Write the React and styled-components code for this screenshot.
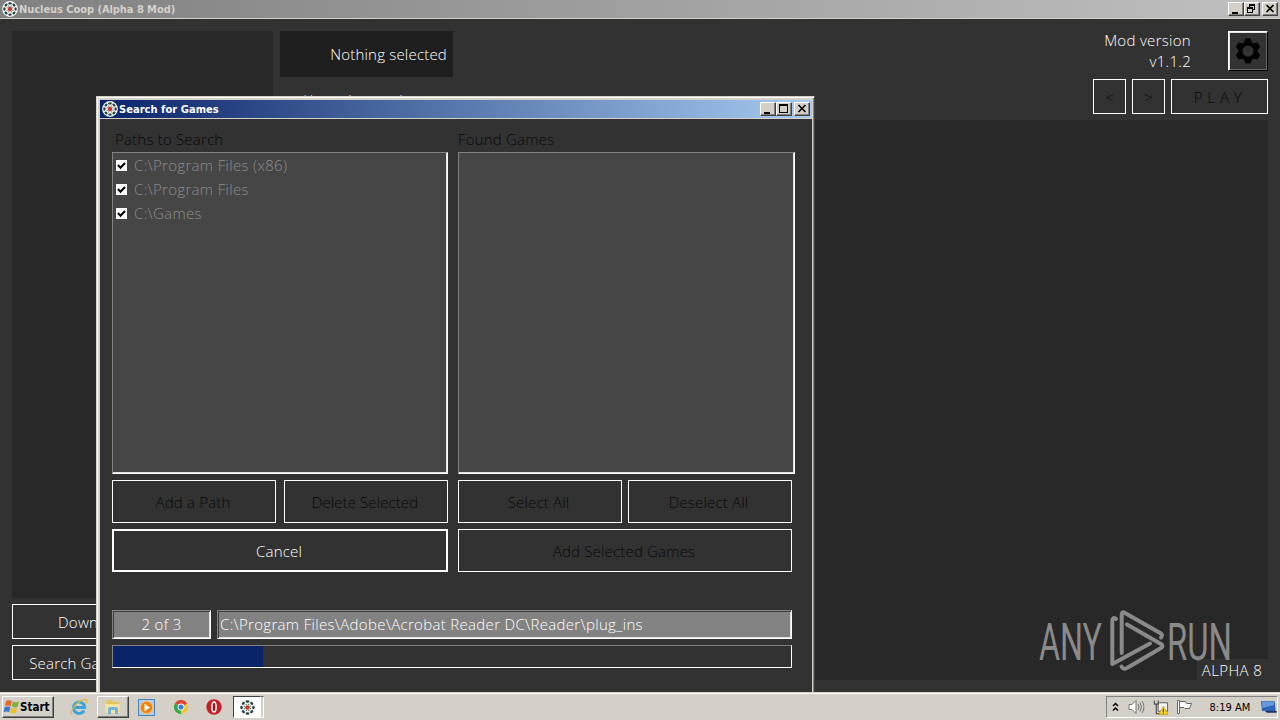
import React from 'react';
import styled, { createGlobalStyle, css } from 'styled-components';

const GlobalStyle = createGlobalStyle`
  * {
    box-sizing: border-box;
  }

  body {
    margin: 0;
    overflow: hidden;
    background: #323232;
  }
`;

const uiFont = css`
  font-family: 'Open Sans', 'Noto Sans', sans-serif;
  font-size: 15px;
  font-weight: 300;
`;

const captionFont = css`
  font-family: 'DejaVu Sans Condensed', 'DejaVu Sans', sans-serif;
  font-stretch: condensed;
  font-size: 11px;
`;

const Desktop = styled.div`
  position: relative;
  width: 1280px;
  height: 720px;
  overflow: hidden;
  display: flex;
  flex-direction: column;
  color: #fff;
  white-space: nowrap;
  ${uiFont}
`;

const TitleBar = styled.div`
  display: flex;
  align-items: center;
  flex: none;
  height: 19px;
  padding: 0 2px;
  border-bottom: 1px solid #d4d0c8;
  background: ${({ $active }) =>
    $active
      ? 'linear-gradient(90deg, #0a246a, #a6caf0)'
      : 'linear-gradient(90deg, #808080, #c0c0c0)'};
  color: ${({ $active }) => ($active ? '#fff' : '#d4d0c8')};
`;

const Caption = styled.span`
  flex: 1;
  height: 18px;
  margin-left: 1px;
  line-height: 20px;
  ${captionFont}
  font-weight: 700;
  letter-spacing: ${({ $track }) => $track || 0}px;
`;

const CaptionButton = styled.div`
  width: 16px;
  height: 14px;
  margin-left: ${({ $gap }) => $gap || 0}px;
  background: #d4d0c8;
  border: 1px solid;
  border-color: #fff #404040 #404040 #fff;
  box-shadow: inset -1px -1px #808080;

  svg {
    display: block;
  }
`;

const MainBody = styled.div`
  flex: 1;
  display: flex;
  gap: 7px;
  padding: 12px 12px 0;
  background: #323232;
`;

const Sidebar = styled.div`
  display: flex;
  flex-direction: column;
  gap: 6px;
  width: 261px;
`;

const GameList = styled.div`
  height: 567px;
  background: #282828;
`;

const ButtonRow = styled.div`
  display: flex;
  gap: ${({ $gap }) => $gap || 6}px;

  > * {
    flex: 1 1 0;
  }
`;

const Button = styled.div`
  display: flex;
  align-items: center;
  justify-content: center;
  ${({ $width }) => $width && `&& { flex: none; width: ${$width}px; }`}
  height: ${({ $height }) => $height || 35}px;
  padding-right: ${({ $shift = 2 }) => $shift}px;
  border: ${({ $focused }) => ($focused ? 2 : 1)}px solid #fff;
  color: ${({ $disabled }) => ($disabled ? '#080808' : '#fff')};
  letter-spacing: ${({ $track = 0.18 }) => $track}px;
`;

const Content = styled.div`
  flex: 1;
  display: flex;
  flex-direction: column;
`;

const ContentHeader = styled.div`
  display: flex;
  justify-content: space-between;
  height: 89px;
`;

const Selected = styled.div`
  width: 173px;
  height: 46px;
  margin-bottom: 9px;
  padding-right: 6px;
  background: #1f1f1f;
  text-align: right;
  line-height: 47px;
  letter-spacing: 0.2px;
`;

const Author = styled.div`
  font-size: 13px;
  line-height: 28px;
`;

const HeaderRight = styled.div`
  display: flex;
  flex-direction: column;
  gap: 8px;
`;

const VersionRow = styled.div`
  display: flex;
  justify-content: flex-end;
  gap: 37px;
  height: 40px;
`;

const Version = styled.div`
  margin-top: -1px;
  line-height: 21px;
  text-align: right;
  letter-spacing: 0.3px;
`;

const GearButton = styled.div`
  display: flex;
  align-items: center;
  justify-content: center;
  width: 40px;
  height: 40px;
  border: 1px solid;
  border-color: #fff #000 #000 #fff;
  box-shadow: inset 1px 1px #e3e3e3, inset -1px -1px #696969;
`;

const Stage = styled.div`
  display: flex;
  flex-direction: column;
  align-items: flex-end;
  justify-content: flex-end;
  height: 560px;
  background: #282828;
`;

const Alpha = styled.div`
  width: 71px;
  height: 21px;
  padding-right: 1px;
  background: #323232;
  text-align: center;
  line-height: 22px;
  letter-spacing: 0.4px;
`;

const Watermark = styled.svg`
  position: absolute;
  left: 1036px;
  top: 606px;
`;

const Dialog = styled.div`
  position: absolute;
  left: 96px;
  top: 96px;
  width: 719px;
  height: 600px;
  padding: 2px;
  border: 1px solid;
  border-color: #d4d0c8 #404040 #404040 #d4d0c8;
  box-shadow: inset 1px 1px #fff, inset -1px -1px #808080;
  background: #d4d0c8;
`;

const DialogFrame = styled.div`
  height: 100%;
  margin: 1px 0 0 1px;
  display: flex;
  flex-direction: column;
`;

const DialogBody = styled.div`
  flex: 1;
  padding: 11px 0 0 12px;
  background: #323232;
`;

const Columns = styled.div`
  display: grid;
  grid-template-columns: 336px 337px;
  column-gap: 10px;
`;

const Column = styled.div`
  display: flex;
  flex-direction: column;
  gap: 6px;
`;

const ListLabel = styled.div`
  height: 16px;
  margin-left: ${({ $indent }) => $indent || 0}px;
  color: #080808;
  line-height: 18px;
  letter-spacing: 0.2px;
`;

const ListBox = styled.div`
  height: 322px;
  padding-left: 3px;
  border: 1px solid;
  border-color: #828282 #fff #fff #828282;
  box-shadow: inset -1px -1px #e3e3e3;
  background: #464646;
`;

const PathRow = styled.div`
  display: flex;
  align-items: center;
  gap: 7px;
  height: 24px;
  color: #8c8c8c;
  letter-spacing: 0.32px;
`;

const CheckBox = styled.svg`
  flex: none;
  margin-top: 1px;
  background: #fff;
`;

const ListActions = styled.div`
  display: flex;
  flex-direction: column;
  gap: 6px;
  width: ${({ $width }) => $width}px;
`;

const StatusRow = styled.div`
  display: flex;
  gap: 6px;
  width: 680px;
  margin-top: 38px;
`;

const StatusField = styled.div`
  width: ${({ $width }) => $width}px;
  height: 29px;
  padding-left: ${({ $center }) => ($center ? 0 : 2)}px;
  border: 1px solid;
  border-color: #828282 #fff #fff #828282;
  box-shadow: inset 1px 1px #404040, inset -1px -1px #e3e3e3;
  background: #828282;
  text-align: ${({ $center }) => ($center ? 'center' : 'left')};
  line-height: 27px;
  letter-spacing: 0.32px;
`;

const Progress = styled.div`
  width: 680px;
  height: 23px;
  margin-top: 6px;
  border: 1px solid;
  border-color: #828282 #fff #fff #828282;
`;

const ProgressFill = styled.div`
  height: 100%;
  background: #0a246a;
`;

const TaskBar = styled.div`
  position: relative;
  z-index: 1;
  display: flex;
  align-items: center;
  justify-content: space-between;
  flex: none;
  height: 28px;
  padding: 3px 2px 2px;
  border-top: 1px solid #d4d0c8;
  background: #d4d0c8;
  box-shadow: inset 0 1px #fff;
  color: #000;
  ${captionFont}
`;

const Launchers = styled.div`
  display: flex;
  align-items: center;
`;

const StartButton = styled.div`
  display: flex;
  align-items: center;
  width: 52px;
  height: 22px;
  padding: 0 0 1px;
  margin-right: 8px;
  border: 1px solid;
  border-color: #fff #404040 #404040 #fff;
  box-shadow: inset -1px -1px #808080;
  font-weight: 700;
  font-size: 11.5px;
`;

const TaskItem = styled.div`
  display: flex;
  align-items: center;
  justify-content: center;
  width: ${({ $width }) => $width || 34}px;
  height: 22px;
  ${({ $raised }) =>
    $raised &&
    css`
      margin-left: 1px;
      border: 1px solid;
      border-color: #fff #404040 #404040 #fff;
      box-shadow: inset -1px -1px #808080;
    `}
  ${({ $pressed }) =>
    $pressed &&
    css`
      margin-left: 2px;
      border: 1px solid;
      border-color: #404040 #fff #fff #404040;
      background: #fff;
    `}
`;

const Grip = styled.div`
  width: 3px;
  height: 22px;
  border: 1px solid;
  border-color: #404040 #fff #fff #d4d0c8;
`;

const Tray = styled.div`
  display: flex;
  align-items: center;
  width: 172px;
  height: 22px;
  padding-left: 4px;
  border: 1px solid;
  border-color: #808080 #fff #fff #808080;
`;

const Clock = styled.span`
  width: 51px;
  margin: 0 2px 0 9px;
  letter-spacing: 0.05px;
`;

const petals = [0, 45, 90, 135, 180, 225, 270, 315];

const NucleusIcon = ({ size = 16 }) => (
  <svg width={size} height={size} viewBox="0 0 16 16">
    <circle cx="8" cy="8" r="7.9" fill="#f4f4f4" />
    {petals.map((angle) => (
      <ellipse
        key={angle}
        cx="8"
        cy="2.4"
        rx="1.7"
        ry="1.2"
        fill="#26443e"
        transform={`rotate(${angle} 8 8)`}
      />
    ))}
    {petals.map((angle) => (
      <circle
        key={angle}
        cx="8"
        cy="4.9"
        r="0.6"
        fill="#52685f"
        transform={`rotate(${angle + 22} 8 8)`}
      />
    ))}
    <circle cx="8" cy="8" r="2.2" fill="#c8382c" />
  </svg>
);

const MinimizeGlyph = () => (
  <svg width="14" height="12" shapeRendering="crispEdges">
    <path d="M3 9h6v2H3z" />
  </svg>
);

const MaximizeGlyph = () => (
  <svg width="14" height="12" shapeRendering="crispEdges">
    <path d="M2 1h9v9H2zM3 3v6h7V3z" fillRule="evenodd" />
  </svg>
);

const RestoreGlyph = () => (
  <svg width="14" height="12" shapeRendering="crispEdges">
    <path d="M4 1h6v6H8V6h1V3H5v1H4zM2 4h6v6H2zM3 6v3h4V6z" fillRule="evenodd" />
  </svg>
);

const CloseGlyph = () => (
  <svg width="14" height="12">
    <path d="M3.5 2l7 7M10.5 2l-7 7" stroke="#000" strokeWidth="1.6" />
  </svg>
);

const WindowButtons = ({ restored }) => (
  <>
    <CaptionButton>
      <MinimizeGlyph />
    </CaptionButton>
    <CaptionButton>{restored ? <RestoreGlyph /> : <MaximizeGlyph />}</CaptionButton>
    <CaptionButton $gap={2}>
      <CloseGlyph />
    </CaptionButton>
  </>
);

const GearIcon = () => (
  <svg width="28" height="28" viewBox="-14 -14 28 28">
    <circle r="7.6" fill="none" stroke="#000" strokeWidth="4" />
    {[0, 60, 120, 180, 240, 300].map((angle) => (
      <path
        key={angle}
        d="M-3.6 -8.5L-2.2 -12H2.2L3.6 -8.5z"
        stroke="#000"
        strokeLinejoin="round"
        transform={`rotate(${angle})`}
      />
    ))}
  </svg>
);

const AnyRunLogo = () => (
  <Watermark width="200" height="70" fill="#8a8a8a">
    <g fontFamily="Roboto, sans-serif" fontSize="52" fontWeight="400">
      <text x="3" y="54" textLength="63" lengthAdjust="spacingAndGlyphs">
        ANY
      </text>
      <text x="131" y="54" textLength="65" lengthAdjust="spacingAndGlyphs">
        RUN
      </text>
    </g>
    <g fill="none" stroke="#8a8a8a" strokeWidth="4" strokeLinecap="round" strokeLinejoin="round">
      <path d="M80 13Q76.3 10.5 76.3 15V58L114 37.5" />
      <path d="M85.7 47V9Q85.7 5 89 7L125 27.5Q127 29 125 31.5" />
      <path d="M91 18.5L125 38Q128 40 125 42L91 62Q87 64 85.5 60.5" />
    </g>
  </Watermark>
);

const StartIcon = () => (
  <svg width="17" height="16" viewBox="0 0 17 16">
    <path d="M3 2Q6 .5 9 2L7.7 7Q5 6 2 7z" fill="#e8682a" />
    <path d="M10 2.5Q13 4 16 2.5L14.5 8Q12 9 8.7 7.5z" fill="#7fb13c" />
    <path d="M1.7 8Q5 6.8 7.5 8L6.2 13Q3 12 .5 13z" fill="#3d78c8" />
    <path d="M8.5 8.5Q11 10 14.3 9L13 14Q10 15 7 13.5z" fill="#f0bd2e" />
  </svg>
);

const IeIcon = () => (
  <svg width="18" height="18" viewBox="0 0 18 18" fill="none">
    <path d="M14 12.5A5.7 5.7 0 1 1 14.7 9.5H5" stroke="#3ba3dc" strokeWidth="2.9" />
    <path d="M2 16.5C-1 14 7 3 14 1.7C18 1 17 4 15.5 6" stroke="#e6b93c" strokeWidth="1.3" />
  </svg>
);

const FolderIcon = () => (
  <svg width="18" height="18" viewBox="0 0 18 18">
    <path d="M2 4l1-2h5l1 2h6v8H2z" fill="#e5c45c" />
    <path d="M1 6h15l-1 9H2z" fill="#f7e49c" />
    <path d="M4 16v-5q0-2 2-2h6q2 0 2 2v5h-3v-4H7v4z" fill="#6fb6df" />
  </svg>
);

const PlayerIcon = () => (
  <svg width="17" height="17" viewBox="0 0 17 17">
    <rect x=".5" y=".5" width="16" height="16" fill="#a9cdec" stroke="#4785bd" />
    <circle cx="8.5" cy="8.5" r="6.3" fill="#ef8412" stroke="#fbc778" />
    <path d="M6.5 4.8v7.4l5.5-3.7z" fill="#fff" />
  </svg>
);

const ChromeIcon = () => (
  <svg width="14" height="14" viewBox="0 0 14 14">
    <circle cx="7" cy="7" r="7" fill="#f6c72c" />
    <path d="M7 7L.9 3.5A7 7 0 0 1 13.1 3.5z" fill="#dc4535" />
    <path d="M7 7L.9 3.5A7 7 0 0 0 7 14z" fill="#35a351" />
    <circle cx="7" cy="7" r="3.4" fill="#fff" />
    <circle cx="7" cy="7" r="2.6" fill="#3d7de0" />
  </svg>
);

const OperaIcon = () => (
  <svg width="16" height="16" viewBox="0 0 16 16">
    <circle cx="8" cy="8" r="7.7" fill="#c31f27" />
    <ellipse cx="8" cy="8" rx="2.1" ry="5" fill="#a0141b" stroke="#fff" strokeWidth="1.5" />
  </svg>
);

const ChevronsIcon = () => (
  <svg width="10" height="12" fill="none" stroke="#000" strokeWidth="1.5">
    <path d="M2 5l2.5-2.5L7 5M2 9.5L4.5 7L7 9.5" />
  </svg>
);

const SpeakerIcon = () => (
  <svg width="17" height="16" viewBox="0 0 17 16" stroke="#777">
    <path d="M1 5.5h3l4-4v13l-4-4H1z" fill="#fff" />
    <path d="M10 5q2 3 0 6M12 3.5q3 4.5 0 9M14 2q4 6 0 12" fill="none" />
  </svg>
);

const NetworkIcon = () => (
  <svg width="17" height="17" viewBox="0 0 17 17">
    <path d="M5.5 3.5h10v9h-10z" fill="#f4f4f4" stroke="#555" />
    <path d="M1.5 1v4h4V1M3.5 5v10h4" fill="none" stroke="#555" strokeWidth="1.3" />
    <path d="M11 7l5 9H6z" fill="#f5d21d" stroke="#b18c00" strokeWidth=".6" />
    <path d="M11 10v3M11 14v1" stroke="#000" />
  </svg>
);

const FlagIcon = () => (
  <svg width="17" height="16" viewBox="0 0 17 16" fill="#fff" stroke="#666">
    <path d="M1.5 1.5h2v13h-2z" />
    <path d="M3.5 2.5h6l1 2h5l-2 5H9l-1-1H3.500z" />
  </svg>
);

const DesktopIcon = () => (
  <svg width="16" height="14" viewBox="0 0 16 14">
    <path d="M0 1h14l1 10H1z" fill="#2d63b4" />
    <path d="M1 2h12l.4 3L1.5 8z" fill="#639bdf" />
    <path d="M4 11h12v2H6z" fill="#1e3458" />
  </svg>
);

const paths = ['C:\\Program Files (x86)', 'C:\\Program Files', 'C:\\Games'];

const PathItem = ({ children }) => (
  <PathRow>
    <CheckBox width="11" height="11">
      <path d="M2 5l2.5 2.8L9 3" fill="none" stroke="#000" strokeWidth="2" />
    </CheckBox>
    {children}
  </PathRow>
);

const MainWindow = () => (
  <>
    <TitleBar>
      <NucleusIcon />
      <Caption $track={-0.05}>Nucleus Coop (Alpha 8 Mod)</Caption>
      <WindowButtons restored />
    </TitleBar>
    <MainBody>
      <Sidebar>
        <GameList />
        <Button $track={0.25}>Download Game Scripts</Button>
        <ButtonRow>
          <Button $width={136}>Search Games</Button>
          <Button>Add Game</Button>
        </ButtonRow>
      </Sidebar>
      <Content>
        <ContentHeader>
          <div>
            <Selected>Nothing selected</Selected>
            <Author>Mod by nucleus mod</Author>
          </div>
          <HeaderRight>
            <VersionRow>
              <Version>
                Mod version
                <br />
                v1.1.2
              </Version>
              <GearButton>
                <GearIcon />
              </GearButton>
            </VersionRow>
            <ButtonRow>
              <Button $disabled $width={33} $shift={0}>
                &lt;
              </Button>
              <Button $disabled $width={33} $shift={0}>
                &gt;
              </Button>
              <Button $disabled $width={97} $shift={3} $track={0.5}>
                P L A Y
              </Button>
            </ButtonRow>
          </HeaderRight>
        </ContentHeader>
        <Stage>
          <Alpha>ALPHA 8</Alpha>
        </Stage>
      </Content>
    </MainBody>
  </>
);

const SearchDialog = ({ progress }) => (
  <Dialog>
    <DialogFrame>
      <TitleBar $active>
        <NucleusIcon />
        <Caption $track={0.05}>Search for Games</Caption>
        <WindowButtons />
      </TitleBar>
      <DialogBody>
        <Columns>
          <Column>
            <ListLabel $indent={3}>Paths to Search</ListLabel>
            <ListBox>
              {paths.map((path) => (
                <PathItem key={path}>{path}</PathItem>
              ))}
            </ListBox>
            <ListActions $width={336}>
              <ButtonRow $gap={8}>
                <Button $disabled $height={43}>
                  Add a Path
                </Button>
                <Button $disabled $height={43} $track={0.1}>
                  Delete Selected
                </Button>
              </ButtonRow>
              <Button $focused $height={43}>
                Cancel
              </Button>
            </ListActions>
          </Column>
          <Column>
            <ListLabel>Found Games</ListLabel>
            <ListBox />
            <ListActions $width={334}>
              <ButtonRow>
                <Button $disabled $height={43} $shift={3}>
                  Select All
                </Button>
                <Button $disabled $height={43} $shift={3}>
                  Deselect All
                </Button>
              </ButtonRow>
              <Button $disabled $height={43}>
                Add Selected Games
              </Button>
            </ListActions>
          </Column>
        </Columns>
        <StatusRow>
          <StatusField $width={99} $center>
            2 of 3
          </StatusField>
          <StatusField $width={575}>
            C:\Program Files\Adobe\Acrobat Reader DC\Reader\plug_ins
          </StatusField>
        </StatusRow>
        <Progress>
          <ProgressFill style={{ width: `${progress}%` }} />
        </Progress>
      </DialogBody>
    </DialogFrame>
  </Dialog>
);

const App = () => (
  <Desktop>
    <GlobalStyle />
    <MainWindow />
    <SearchDialog progress={22.1} />
    <TaskBar>
      <Launchers>
        <StartButton>
          <StartIcon />
          Start
        </StartButton>
        <TaskItem>
          <IeIcon />
        </TaskItem>
        <TaskItem $raised $width={32}>
          <FolderIcon />
        </TaskItem>
        <TaskItem $width={35}>
          <PlayerIcon />
        </TaskItem>
        <TaskItem $width={33}>
          <ChromeIcon />
        </TaskItem>
        <TaskItem>
          <OperaIcon />
        </TaskItem>
        <TaskItem $pressed $width={28}>
          <NucleusIcon size={17} />
        </TaskItem>
        <Grip />
      </Launchers>
      <Tray>
        <ChevronsIcon />
        <TaskItem $width={33}>
          <SpeakerIcon />
        </TaskItem>
        <TaskItem $width={16}>
          <NetworkIcon />
        </TaskItem>
        <TaskItem $width={32}>
          <FlagIcon />
        </TaskItem>
        <Clock>8:19 AM</Clock>
        <DesktopIcon />
      </Tray>
    </TaskBar>
    <AnyRunLogo />
  </Desktop>
);

export default App;
